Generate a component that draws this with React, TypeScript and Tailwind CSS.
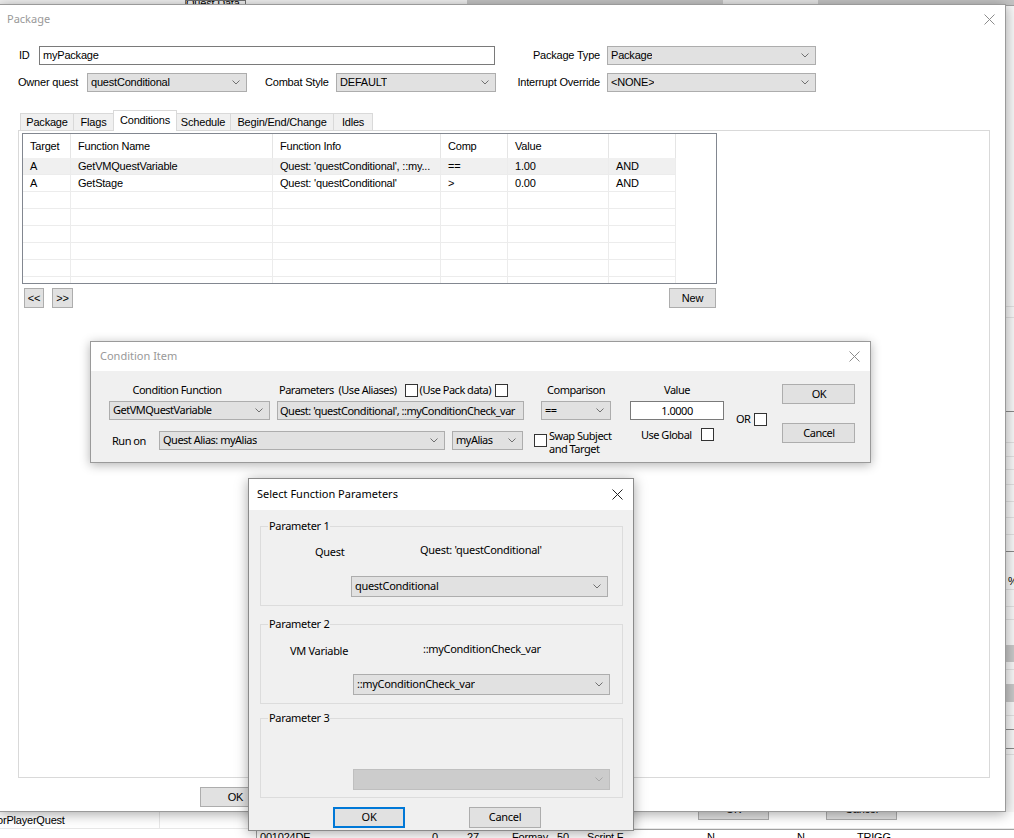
import React from "react";
import clsx from "clsx";

const ms = "font-['Liberation_Sans',Arial,sans-serif] text-[11px] tracking-[-0.2px] text-black";
const seg = "font-['Noto_Sans',sans-serif] text-[11px]";

function Chevron({ light }: { light?: boolean }) {
  return (
    <svg width="8" height="5" viewBox="0 0 8 5" className="shrink-0">
      <path d="M0.5 0.5 L4 4 L7.5 0.5" fill="none" stroke={light ? "#a8a8a8" : "#707070"} strokeWidth="1" />
    </svg>
  );
}

function Combo({ text, className, disabled }: { text?: string; className?: string; disabled?: boolean }) {
  return (
    <div
      className={clsx(
        "flex items-center justify-between border pl-[3px] pr-[6px] shrink-0",
        disabled ? "bg-[#cccccc] border-[#bfbfbf]" : "bg-[#e1e1e1] border-[#adadad]",
        className
      )}
    >
      <span className="whitespace-nowrap overflow-hidden">{text}</span>
      <Chevron light={disabled} />
    </div>
  );
}

function Btn({ label, className }: { label: string; className?: string }) {
  return (
    <div className={clsx("flex items-center justify-center bg-[#e1e1e1] border border-[#adadad] shrink-0", className)}>
      {label}
    </div>
  );
}

function Check({ className }: { className?: string }) {
  return <div className={clsx("w-[13px] h-[13px] bg-white border border-[#333333] shrink-0", className)} />;
}

function CloseX({ color }: { color: string }) {
  return (
    <svg width="11" height="11" viewBox="0 0 11 11">
      <path d="M0.5 0.5 L10.5 10.5 M10.5 0.5 L0.5 10.5" stroke={color} strokeWidth="1" />
    </svg>
  );
}

const colW = ["w-[48px]", "w-[202px]", "w-[168px]", "w-[67px]", "w-[101px]", "w-[67px]"];
const headers = ["Target", "Function Name", "Function Info", "Comp", "Value", ""];
const rows = [
  ["A", "GetVMQuestVariable", "Quest: 'questConditional', ::my...", "==", "1.00", "AND"],
  ["A", "GetStage", "Quest: 'questConditional'", ">", "0.00", "AND"],
  ["", "", "", "", "", ""],
  ["", "", "", "", "", ""],
  ["", "", "", "", "", ""],
  ["", "", "", "", "", ""],
  ["", "", "", "", "", ""],
  ["", "", "", "", "", ""],
];

const tabs = [
  { name: "Package", w: "w-[54px]" },
  { name: "Flags", w: "w-[41px]" },
  { name: "Conditions", w: "w-[64px]", active: true },
  { name: "Schedule", w: "w-[56px]" },
  { name: "Begin/End/Change", w: "w-[104px]" },
  { name: "Idles", w: "w-[40px]" },
];

// slices of the window behind, seen to the right of the Package window
const strip = [
  "h-[301px] border-b border-[#e0e0e0]",
  "h-[11px] border-b border-[#e0e0e0]",
  "h-[94px] border-b border-[#8a8a8a]",
  "h-[31px] border-b border-[#e0e0e0]",
  "h-[14px] border-b border-[#e0e0e0]",
  "h-[13px] border-b border-[#e0e0e0]",
  "h-[15px] border-b border-[#e0e0e0]",
  "h-[17px] border-b border-[#e0e0e0]",
  "h-[16px] border-b border-[#e0e0e0]",
  "h-[17px] border-b border-[#e0e0e0]",
  "h-[17px] border-b border-[#8a8a8a]",
  "pct",
  "h-[17px] border-b border-[#e0e0e0]",
  "h-[13px] border-b border-[#e0e0e0]",
  "h-[25px]",
  "h-[17px] bg-[#c8c8c8]",
  "h-[8px] border-b border-[#e0e0e0]",
  "h-[14px]",
  "h-[18px] bg-[#c8c8c8]",
  "h-[14px] border-b border-[#e0e0e0]",
  "h-[14px] border-b border-[#8a8a8a]",
  "h-[19px] border-b border-[#8a8a8a]",
  "h-[6px] border-b border-[#e0e0e0]",
];

function Background() {
  return (
    <div className="absolute inset-0 flex flex-col bg-white">
      {/* strip along the top */}
      <div className="h-[6px] flex bg-[#f0f0f0] border-b border-[#a0a0a0]">
        <div className="w-[185px]" />
        <div className={clsx(ms, "w-[61px] border border-[#707070] leading-[4px] overflow-hidden")}>Quest Data</div>
        <div className="w-[221px]" />
        <div className="w-[256px] bg-[#c4c4c4]" />
        <div className="w-[95px] bg-[#e6e6e6]" />
        <div className="flex-1 bg-[#c4c4c4]" />
      </div>
      {/* right strip */}
      <div className="flex-1 flex">
        <div className="flex-1" />
        <div className="w-[12px] flex flex-col bg-[#f7f7f7]">
          {strip.map((s, i) =>
            s === "pct" ? (
              <div key={i} className={clsx(ms, "h-[38px] border-b border-[#e0e0e0] pl-[6px] flex items-end leading-[14px] pb-[1px]")}>
                %
              </div>
            ) : (
              <div key={i} className={s} />
            )
          )}
          <div className="flex-1" />
        </div>
      </div>
      {/* table rows along the bottom */}
      <div className="h-[26px] flex flex-col">
        <div className="h-[17px] flex border-b border-[#e8e8e8]">
          <div className={clsx(ms, "w-[163px] border-r border-[#e8e8e8] leading-[17px] -ml-[3px]")}>orPlayerQuest</div>
          <div className="flex-1" />
        </div>
        <div className="flex-1 flex">
          <div className="w-[256px]" />
          <div className={clsx(ms, "flex-1 flex border-l border-t border-[#a0a0a0] leading-[14px] overflow-hidden")}>
            <div className="w-[175px] pl-[3px]">001024DE</div>
            <div className="w-[35px]">0</div>
            <div className="w-[45px]">27</div>
            <div className="w-[45px]">Formay</div>
            <div className="w-[30px]">50</div>
            <div className="w-[120px]">Script F</div>
            <div className="w-[90px]">N</div>
            <div className="w-[60px]">N</div>
            <div>TRIGG</div>
          </div>
        </div>
      </div>
      {/* buttons of the window behind */}
      <Btn label="OK" className={clsx(ms, "absolute left-[698px] top-[799px] w-[71px] h-[21px]")} />
      <Btn label="Cancel" className={clsx(ms, "absolute left-[826px] top-[799px] w-[71px] h-[21px]")} />
    </div>
  );
}

function PackageWindow() {
  return (
    <div className="absolute left-[-1px] top-[4px] w-[1007px] h-[808px] bg-white border border-[#9a9a9a] shadow-[0_2px_12px_rgba(0,0,0,0.35)] flex flex-col">
      <div className="h-[29px] flex items-center justify-between pl-[7px] pr-[10px]">
        <span className={clsx(seg, "text-[#999999]")}>Package</span>
        <CloseX color="#8c8c8c" />
      </div>

      <div className={clsx(ms, "flex flex-col")}>
        {/* ID row */}
        <div className="mt-[12px] h-[19px] flex items-center">
          <span className="ml-[19px] w-[20px]">ID</span>
          <div className="w-[456px] h-[19px] border border-[#7a7a7a] pl-[3px] leading-[17px]">myPackage</div>
          <span className="w-[105px] text-right">Package Type</span>
          <Combo text="Package" className="ml-[7px] w-[209px] h-[19px]" />
        </div>
        {/* owner quest row */}
        <div className="mt-[8px] h-[19px] flex items-center">
          <span className="ml-[18px] w-[69px]">Owner quest</span>
          <Combo text="questConditional" className="w-[160px] h-[19px]" />
          <span className="ml-[18px] w-[71px]">Combat Style</span>
          <Combo text="DEFAULT" className="w-[160px] h-[19px]" />
          <span className="w-[104px] text-right">Interrupt Override</span>
          <Combo text="<NONE>" className="ml-[7px] w-[209px] h-[19px]" />
        </div>

        {/* tabs */}
        <div className="mt-[18px] h-[21px] flex items-end pl-[20px]">
          {tabs.map((t) =>
            t.active ? (
              <div
                key={t.name}
                className={clsx(t.w, "h-[21px] bg-white border border-b-0 border-[#d9d9d9] -mx-[1px] relative z-10 flex items-center justify-center pb-[2px]")}
              >
                {t.name}
              </div>
            ) : (
              <div
                key={t.name}
                className={clsx(t.w, "h-[18px] bg-[#f0f0f0] border border-b-0 border-[#d9d9d9] -ml-[1px] first:ml-0 flex items-center justify-center")}
              >
                {t.name}
              </div>
            )
          )}
        </div>

        {/* tab page */}
        <div className="ml-[18px] w-[972px] h-[648px] -mt-[1px] border border-[#d9d9d9] flex flex-col pl-[3px] pt-[2px]">
          <div className="w-[695px] h-[151px] border border-[#828790] flex flex-col overflow-hidden">
            <div className="h-[24px] flex shrink-0">
              {headers.map((h, i) => (
                <div key={i} className={clsx(colW[i], "border-r border-[#e5e5e5] pl-[7px] flex items-center")}>
                  {h}
                </div>
              ))}
            </div>
            {rows.map((r, ri) => (
              <div key={ri} className="h-[17px] flex shrink-0">
                {r.map((c, ci) => (
                  <div
                    key={ci}
                    className={clsx(
                      colW[ci],
                      "border-r border-b border-[#ececec] pl-[7px] leading-[16px] whitespace-nowrap",
                      ri === 0 && "bg-[#f0f0f0]"
                    )}
                  >
                    {c}
                  </div>
                ))}
              </div>
            ))}
          </div>
          <div className="mt-[4px] flex items-center">
            <Btn label="<<" className="ml-[2px] w-[20px] h-[20px]" />
            <Btn label=">>" className="ml-[8px] w-[21px] h-[20px]" />
            <div className="flex-1" />
            <Btn label="New" className="mr-[273px] w-[47px] h-[20px]" />
          </div>
        </div>

        <div className="mt-[9px] flex">
          <Btn label="OK" className="ml-[200px] w-[71px] h-[20px]" />
        </div>
      </div>
    </div>
  );
}

function ConditionItem() {
  return (
    <div className="absolute left-[90px] top-[341px] w-[781px] h-[122px] border border-[#9a9a9a] bg-[#f0f0f0] shadow-[0_2px_10px_rgba(0,0,0,0.3)] flex flex-col">
      <div className="h-[29px] bg-white flex items-center justify-between pl-[9px] pr-[10px]">
        <span className={clsx(seg, "text-[#999999]")}>Condition Item</span>
        <CloseX color="#8c8c8c" />
      </div>
      <div className={clsx(seg, "text-black tracking-[-0.5px] flex pl-[18px] pt-[11px]")}>
        <div className="w-[615px] flex flex-col">
          <div className="h-[16px] flex items-center">
            <span className="w-[161px] text-center pr-[25px]">Condition Function</span>
            <div className="ml-[7px] w-[247px] flex items-center">
              <span className="ml-[2px] whitespace-pre">Parameters  (Use Aliases)</span>
              <Check className="ml-[8px]" />
              <span className="ml-[2px]">(Use Pack data)</span>
              <Check className="ml-[4px]" />
            </div>
            <span className="ml-[17px] w-[70px] text-center">Comparison</span>
            <span className="ml-[19px] w-[94px] text-center">Value</span>
          </div>
          <div className="mt-[3px] flex items-center">
            <Combo text="GetVMQuestVariable" className="w-[161px] h-[19px]" />
            <div className="ml-[7px] w-[247px] h-[19px] bg-[#e1e1e1] border border-[#adadad] pl-[2px] leading-[17px] whitespace-nowrap overflow-hidden">
              Quest: 'questConditional', ::myConditionCheck_var
            </div>
            <Combo text="==" className="ml-[17px] w-[70px] h-[19px]" />
            <div className="ml-[19px] w-[94px] h-[19px] bg-white border border-[#7a7a7a] text-center leading-[17px]">1.0000</div>
          </div>
          <div className="mt-[8px] flex items-start">
            <span className="ml-[3px] w-[47px] mt-[5px]">Run on</span>
            <Combo text="Quest Alias: myAlias" className="mt-[3px] w-[286px] h-[19px]" />
            <Combo text="myAlias" className="ml-[7px] mt-[3px] w-[71px] h-[19px]" />
            <Check className="ml-[11px] mt-[6px]" />
            <span className="ml-[2px] w-[80px] leading-[13px] mt-[1px]">
              Swap Subject
              <br />
              and Target
            </span>
            <span className="ml-[12px] mt-[-1px] w-[60px]">Use Global</span>
            <Check className="ml-0" />
          </div>
        </div>
        <div className="ml-[12px] mt-[29px] self-start flex items-center">
          <span>OR</span>
          <Check className="ml-[4px]" />
        </div>
        <div className="ml-[15px] mt-[2px] flex flex-col">
          <Btn label="OK" className="w-[73px] h-[20px]" />
          <Btn label="Cancel" className="mt-[19px] w-[73px] h-[20px]" />
        </div>
      </div>
    </div>
  );
}

function Group({ label, children, className }: { label: string; children?: React.ReactNode; className?: string }) {
  return (
    <div className={clsx("relative w-[363px] h-[80px] border border-[#dcdcdc] flex flex-col", className)}>
      <span className="absolute left-[7px] -top-[9px] bg-[#f0f0f0] px-[1px]">{label}</span>
      {children}
    </div>
  );
}

function SelectParams() {
  return (
    <div className="absolute left-[248px] top-[478px] w-[386px] h-[353px] border border-[#8a8a8a] bg-[#f0f0f0] shadow-[0_2px_12px_rgba(0,0,0,0.35)] flex flex-col">
      <div className="h-[31px] bg-white flex items-center justify-between pl-[8px] pr-[10px]">
        <span className={clsx(seg, "text-black")}>Select Function Parameters</span>
        <CloseX color="#222222" />
      </div>
      <div className={clsx(seg, "text-black tracking-[-0.3px] flex flex-col pl-[11px] pt-[16px]")}>
        <Group label="Parameter 1">
          <div className="mt-[17px] h-[16px] flex items-center">
            <span className="ml-[54px] w-[105px]">Quest</span>
            <span className="mb-[4px]">Quest: 'questConditional'</span>
          </div>
          <Combo text="questConditional" className="ml-[90px] mt-[16px] w-[257px] h-[21px]" />
        </Group>
        <Group label="Parameter 2" className="mt-[18px]">
          <div className="mt-[18px] h-[16px] flex items-center">
            <span className="ml-[29px] w-[133px]">VM Variable</span>
            <span className="mb-[4px]">::myConditionCheck_var</span>
          </div>
          <Combo text="::myConditionCheck_var" className="ml-[92px] mt-[15px] w-[257px] h-[21px]" />
        </Group>
        <Group label="Parameter 3" className="mt-[14px]">
          <Combo disabled className="ml-[92px] mt-[50px] w-[257px] h-[21px]" />
        </Group>
        <div className="mt-[9px] flex">
          <div className="ml-[73px] w-[72px] h-[21px] bg-[#e1e1e1] border-2 border-[#0078d7] flex items-center justify-center">OK</div>
          <Btn label="Cancel" className="ml-[64px] w-[72px] h-[21px]" />
        </div>
      </div>
    </div>
  );
}

export default function App() {
  return (
    <div className="relative w-[1014px] h-[838px] overflow-hidden bg-white">
      <Background />
      <PackageWindow />
      <ConditionItem />
      <SelectParams />
    </div>
  );
}
